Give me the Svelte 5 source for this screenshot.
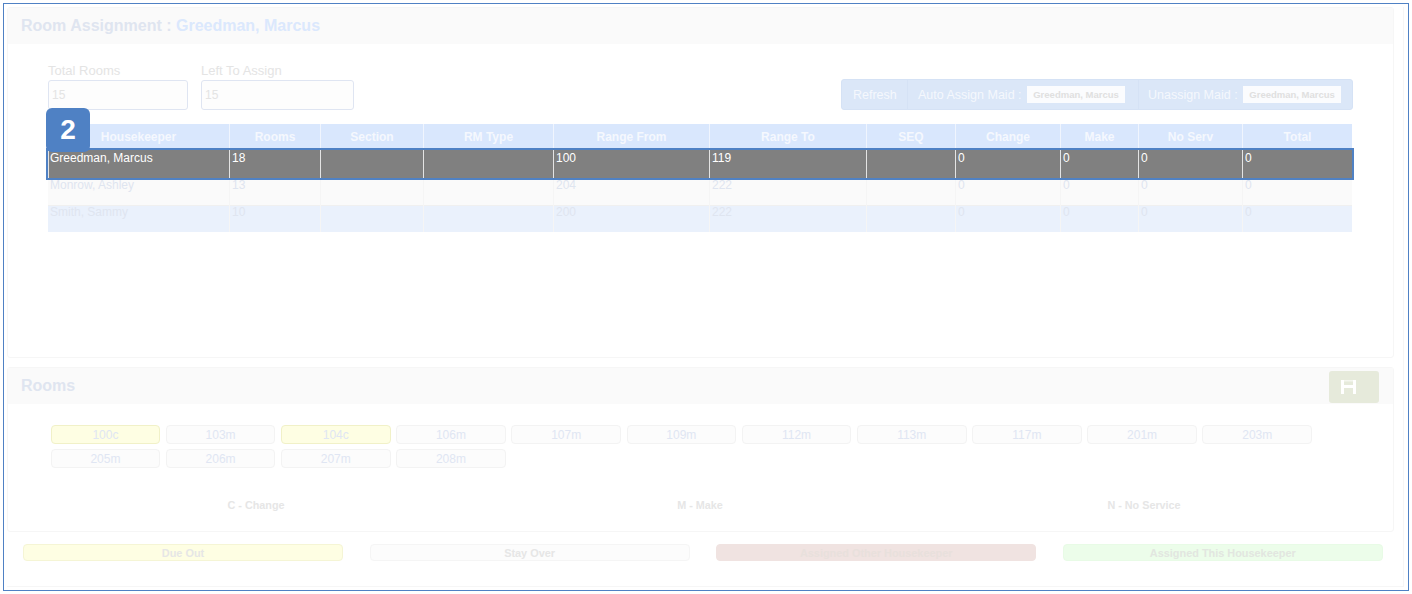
<script>
  const columns = [
    { label: 'Housekeeper', key: 'name', width: 181 },
    { label: 'Rooms', key: 'rooms', width: 91 },
    { label: 'Section', key: 'section', width: 103 },
    { label: 'RM Type', key: 'type', width: 130 },
    { label: 'Range From', key: 'from', width: 156 },
    { label: 'Range To', key: 'to', width: 157 },
    { label: 'SEQ', key: 'seq', width: 89 },
    { label: 'Change', key: 'change', width: 105 },
    { label: 'Make', key: 'make', width: 78 },
    { label: 'No Serv', key: 'noServ', width: 104 },
    { label: 'Total', key: 'total', width: 110 }
  ];

  const keepers = [
    { name: 'Greedman, Marcus', rooms: 18, section: '', type: '', from: 100, to: 119, seq: '', change: 0, make: 0, noServ: 0, total: 0 },
    { name: 'Monrow, Ashley', rooms: 13, section: '', type: '', from: 204, to: 222, seq: '', change: 0, make: 0, noServ: 0, total: 0 },
    { name: 'Smith, Sammy', rooms: 10, section: '', type: '', from: 200, to: 222, seq: '', change: 0, make: 0, noServ: 0, total: 0 }
  ];

  const rooms = ['100c', '103m', '104c', '106m', '107m', '109m', '112m', '113m', '117m', '201m', '203m', '205m', '206m', '207m', '208m'];
  const codes = ['C - Change', 'M - Make', 'N - No Service'];
  const legend = [
    { label: 'Due Out', kind: 'due' },
    { label: 'Stay Over', kind: 'stay' },
    { label: 'Assigned Other Housekeeper', kind: 'other' },
    { label: 'Assigned This Housekeeper', kind: 'this' }
  ];
</script>

<div class="frame">
  <div class="page">
    <section class="panel top">
      <header class="panel-head">
        <h2>Room Assignment : <span class="who">Greedman, Marcus</span></h2>
      </header>

      <div class="controls">
        <div class="fields">
          <div class="field">
            <span class="field-label">Total Rooms</span>
            <div class="input one">15</div>
          </div>
          <div class="field">
            <span class="field-label">Left To Assign</span>
            <div class="input two">15</div>
          </div>
        </div>
        <div class="toolbar">
          <div class="tool refresh">Refresh</div>
          <div class="tool auto">Auto Assign Maid : <span class="pick">Greedman, Marcus</span></div>
          <div class="tool unassign">Unassign Maid : <span class="pick">Greedman, Marcus</span></div>
        </div>
      </div>

      <div class="table-wrap">
        <div class="badge">2</div>
        <table>
          <colgroup>
            {#each columns as col}
              <col style="width: {col.width}px" />
            {/each}
          </colgroup>
          <thead>
            <tr>
              {#each columns as col}
                <th>{col.label}</th>
              {/each}
            </tr>
          </thead>
          <tbody>
            {#each keepers as keeper, i}
              <tr class:selected={i === 0} class:alt={i === 2}>
                {#each columns as col}
                  <td>{keeper[col.key]}</td>
                {/each}
              </tr>
            {/each}
          </tbody>
        </table>
      </div>
    </section>

    <section class="panel bottom">
      <header class="panel-head rooms-head">
        <h2>Rooms</h2>
        <button class="save" aria-label="Save">
          <svg width="15" height="14" viewBox="0 0 15 14">
            <path d="M0 0h3v5h9V0h3v14h-3V8H3v6H0z" fill="#fff" />
            <path d="M3 0h9v1.5H3z" fill="#fff" opacity="0.55" />
          </svg>
        </button>
      </header>

      <div class="chips">
        {#each rooms as room}
          <div class="chip" class:change={room.endsWith('c')}>{room}</div>
        {/each}
      </div>

      <div class="codes">
        {#each codes as code}
          <div>{code}</div>
        {/each}
      </div>
    </section>

    <div class="legend">
      {#each legend as item}
        <div class="key {item.kind}">{item.label}</div>
      {/each}
    </div>
  </div>
</div>

<style>
  :global(body) {
    margin: 0;
    background: #fff;
    font-family: "Liberation Sans", Arial, sans-serif;
  }

  .frame {
    box-sizing: border-box;
    width: 1406px;
    height: 588px;
    margin: 3px 0 0 3px;
    border: 1px solid #4f81c4;
    padding: 3px 4px 3px 3px;
  }

  .page {
    box-sizing: border-box;
    height: 100%;
    border-right: 1px solid #f6f6f6;
    border-bottom: 1px solid #f6f6f6;
    padding-right: 9px;
  }

  .panel {
    box-sizing: border-box;
    border: 1px solid #f6f6f6;
    border-radius: 3px;
  }

  .top {
    height: 351px;
  }

  .bottom {
    height: 165px;
    margin-top: 9px;
  }

  .panel-head {
    height: 36px;
    display: flex;
    align-items: center;
    padding-left: 13px;
    background: #fafafa;
  }

  h2 {
    margin: 0;
    font-size: 16px;
    font-weight: 700;
    color: #dfe5f0;
  }

  .who {
    color: #dbe8fd;
  }

  .controls {
    display: flex;
    justify-content: space-between;
    align-items: flex-end;
    padding: 20px 40px 0 40px;
  }

  .fields {
    display: flex;
    gap: 13px;
  }

  .field {
    display: flex;
    flex-direction: column;
    gap: 2px;
  }

  .field-label {
    font-size: 13px;
    line-height: 14px;
    color: #e4e4e4;
  }

  .input {
    box-sizing: border-box;
    height: 30px;
    padding: 0 3px;
    display: flex;
    align-items: center;
    border: 1px solid #dfe5f2;
    border-radius: 3px;
    background: #fdfdfd;
    font-size: 12px;
    color: #e4e4e4;
  }

  .one {
    width: 140px;
  }

  .two {
    width: 153px;
  }

  .toolbar {
    box-sizing: border-box;
    display: flex;
    width: 512px;
    height: 31px;
    border: 1px solid #d5e2f5;
    border-radius: 3px;
    background: #dbe7f8;
    font-size: 12.5px;
    color: #f5f8fd;
  }

  .tool {
    display: flex;
    align-items: center;
    border-right: 1px solid #d5e2f5;
    box-sizing: border-box;
    white-space: pre;
  }

  .refresh {
    width: 66px;
    padding-left: 11px;
  }

  .auto {
    width: 231px;
    padding-left: 10px;
  }

  .unassign {
    flex: 1;
    padding-left: 9px;
    border-right: 0;
  }

  .pick {
    display: flex;
    align-items: center;
    justify-content: center;
    width: 98px;
    height: 17px;
    margin-left: 2px;
    background: #fbfcfe;
    font-size: 9.5px;
    font-weight: 700;
    color: #e0e0e0;
  }

  .table-wrap {
    position: relative;
    margin: 14px 40px 0;
  }

  .badge {
    position: absolute;
    left: -2px;
    top: -16px;
    z-index: 2;
    width: 44px;
    height: 44px;
    display: flex;
    align-items: center;
    justify-content: center;
    border-radius: 6px;
    background: #4f81c4;
    color: #fff;
    font-size: 28px;
    font-weight: 700;
  }

  table {
    width: 1304px;
    table-layout: fixed;
    border-collapse: separate;
    border-spacing: 0;
    font-size: 12px;
  }

  th {
    box-sizing: border-box;
    height: 26px;
    padding: 0;
    background: #d9e7fd;
    border-left: 1px solid #f0f5fe;
    font-weight: 700;
    color: #f5f8fe;
    text-align: center;
  }

  th:first-child {
    border-left: 0;
  }

  tbody tr {
    background: #fafafa;
    color: #dfe5f0;
  }

  tbody tr.alt {
    background: #eaf1fc;
  }

  tr.alt td {
    box-shadow: inset 0 1px 0 #f0f0f0;
  }

  td {
    box-sizing: border-box;
    height: 27px;
    padding: 0 2px;
    vertical-align: top;
    border-left: 1px solid #f5f5f5;
    line-height: 14px;
  }

  td:first-child {
    border-left: 0;
  }

  tbody tr.selected {
    background: #808080;
    color: #fff;
    outline: 2px solid #4f81c4;
    outline-offset: 0;
  }

  tr.selected td {
    height: 28px;
    padding-top: 1px;
    border-left: 1px solid #e4e4e4;
  }

  tr.selected td:first-child {
    padding-left: 1px;
  }

  .rooms-head {
    justify-content: space-between;
    padding-right: 14px;
  }

  .save {
    width: 50px;
    height: 32px;
    margin-top: 2px;
    padding: 0 0 0 12px;
    display: flex;
    align-items: center;
    justify-content: flex-start;
    border: 0;
    border-radius: 3px;
    background: #e6eadb;
  }

  .chips {
    display: grid;
    grid-template-columns: repeat(11, 109.6px);
    gap: 5px 5.6px;
    padding: 21px 0 0 42.6px;
  }

  .chip {
    box-sizing: border-box;
    height: 19px;
    display: flex;
    align-items: center;
    justify-content: center;
    border: 1px solid #f3f3f3;
    border-radius: 4px;
    background: #fcfcfc;
    font-size: 12px;
    color: #e0e6f3;
  }

  .chip.change {
    border-color: #f1f1c8;
    background: #fefee3;
  }

  .codes {
    display: grid;
    grid-template-columns: repeat(3, 444px);
    margin: 31px 0 0 26px;
    font-size: 10.8px;
    font-weight: 700;
    color: #e6e6e6;
    text-align: center;
  }

  .legend {
    display: grid;
    grid-template-columns: repeat(4, 320px);
    gap: 26.6px;
    padding: 12px 0 0 16px;
  }

  .key {
    box-sizing: border-box;
    height: 17px;
    display: flex;
    align-items: center;
    justify-content: center;
    border: 1px solid #f5f5f5;
    border-radius: 4px;
    font-size: 10.9px;
    font-weight: 700;
    color: #e6e6e6;
  }

  .due {
    background: #fefee3;
    border-color: #f5f5d5;
  }

  .stay {
    background: #fcfcfc;
  }

  .other {
    background: #f0e3e1;
    border-color: #f0e3e1;
    color: #e8e0dc;
  }

  .this {
    background: #ecfdea;
    border-color: #e8fbe6;
    color: #e2e6e0;
  }
</style>
